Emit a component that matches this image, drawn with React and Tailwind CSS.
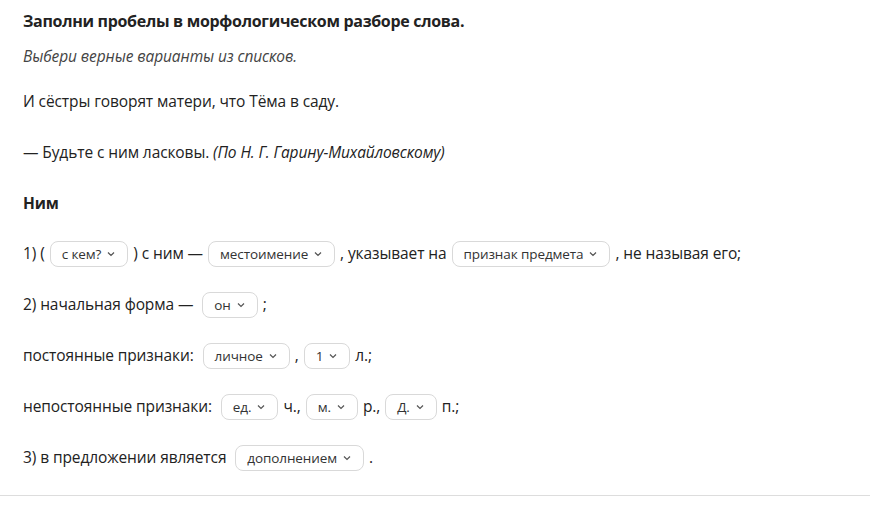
import React from "react";

const F = { fontFamily: '"Open Sans", "Noto Sans", sans-serif' };

function Sel({ t }) {
  return (
    <span className="inline-flex items-center gap-[5px] h-[26px] px-[11px] mx-[5px] rounded-[8px] border border-[#d9d9d9] bg-white text-[13.5px] text-[#333] align-middle">
      {t}
      <svg width="10" height="10" viewBox="0 0 10 10"><path d="M2 3.5 L5 6.5 L8 3.5" fill="none" stroke="#555" strokeWidth="1.2" /></svg>
    </span>
  );
}

export default function App() {
  return (
    <div style={F} className="w-[870px] h-[509px] bg-white text-[#222] text-[15.5px] tracking-[-0.1px]">
      <div className="pl-[23px] pt-[9px]">
        <div className="h-[22px] font-bold text-[16px] tracking-[-0.3px]">Заполни пробелы в морфологическом разборе слова.</div>
        <div className="mt-[14px] h-[22px] italic text-[#444]">Выбери верные варианты из списков.</div>
        <div className="mt-[23px] h-[22px]">И сёстры говорят матери, что Тёма в саду.</div>
        <div className="mt-[29px] h-[22px]">— Будьте с ним ласковы. <i>(По Н. Г. Гарину-Михайловскому)</i></div>
        <div className="mt-[29px] h-[22px] font-bold">Ним</div>
        <div className="mt-[29px] h-[22px] flex items-center">1) (<Sel t="с кем?" />) с ним —<Sel t="местоимение" />, указывает на<Sel t="признак предмета" />, не называя его;</div>
        <div className="mt-[29px] h-[22px] flex items-center">2) начальная форма —&nbsp;<Sel t="он" />;</div>
        <div className="mt-[29px] h-[22px] flex items-center">постоянные признаки:&nbsp;<Sel t="личное" />,<Sel t="1" />л.;</div>
        <div className="mt-[29px] h-[22px] flex items-center">непостоянные признаки:&nbsp;<Sel t="ед." />ч.,<Sel t="м." />р.,<Sel t="Д." />п.;</div>
        <div className="mt-[29px] h-[22px] flex items-center">3) в предложении является&nbsp;<Sel t="дополнением" />.</div>
      </div>
      <div className="mt-[26px] border-t border-[#ddd] w-[870px]" />
    </div>
  );
}
